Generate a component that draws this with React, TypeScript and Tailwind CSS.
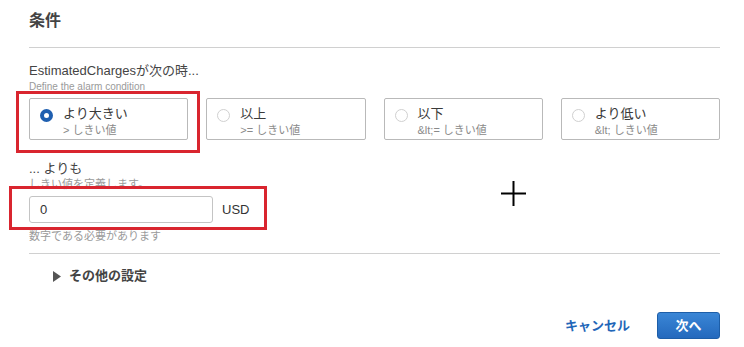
import React from 'react';

const font = { fontFamily: '"Liberation Sans", Arial, "Noto Sans CJK JP", sans-serif' };

type Opt = { label: string; sub: string; checked?: boolean };

const options: Opt[] = [
  { label: 'より大きい', sub: '> しきい値', checked: true },
  { label: '以上', sub: '>= しきい値' },
  { label: '以下', sub: '&lt;= しきい値' },
  { label: 'より低い', sub: '&lt; しきい値' },
];

const RadioCard: React.FC<{ opt: Opt }> = ({ opt }) => (
  <div className="h-[42px] border border-[#b9b9b9] rounded-[2px] flex items-start pl-[10px] pt-[7px] gap-[10px]">
    {opt.checked ? (
      <span className="mt-[3px] w-[13px] h-[13px] rounded-full border-[4px] border-[#1f5fb0] bg-white shrink-0" />
    ) : (
      <span className="mt-[3px] w-[13px] h-[13px] rounded-full border border-[#d0d0d0] bg-white shrink-0" />
    )}
    <div className="flex flex-col">
      <span className="text-[13px] leading-[16px] text-[#3a3a3a]">{opt.label}</span>
      <span className="text-[11px] leading-[14px] mt-[1px] text-[#8a8a8a]">{opt.sub}</span>
    </div>
  </div>
);

export default function App() {
  return (
    <div className="relative w-[744px] h-[347px] bg-white overflow-hidden" style={font}>
      <div className="pl-[29px] pr-[24px]">
        {/* header */}
        <div className="h-[48px] border-b border-[#d0d0d0] pt-[11px]">
          <h2 className="text-[16px] leading-[20px] font-bold text-[#444]">条件</h2>
        </div>

        <div className="mt-[15px] text-[13px] leading-[16px] text-[#444]">EstimatedChargesが次の時...</div>
        <div className="text-[10px] leading-[12px] mt-[2px] text-[#9a9a9a]">Define the alarm condition</div>

        <div className="mt-[5px] grid grid-cols-4 gap-[18px]">
          {options.map((o) => (
            <RadioCard key={o.label} opt={o} />
          ))}
        </div>

        <div className="mt-[21px] text-[13px] leading-[16px] text-[#444]">... よりも</div>
        <div className="text-[11px] leading-[13px] mt-[1px] text-[#9a9a9a]">しきい値を定義します。</div>

        <div className="mt-[5px] flex items-center gap-[9px]">
          <div className="w-[184px] h-[27px] border border-[#c4c4c4] rounded-[3px] flex items-center pl-[10px] text-[13px] text-[#333]">
            0
          </div>
          <span className="text-[13px] text-[#333]">USD</span>
        </div>
        <div className="mt-[6px] text-[11px] leading-[14px] text-[#9a9a9a]">数字である必要があります</div>

        <div className="mt-[10px] border-t border-[#d0d0d0]" />

        <div className="mt-[14px] flex items-center pl-[24px] gap-[8px]">
          <svg width="8" height="11" viewBox="0 0 8 11">
            <path d="M0 0 L8 5.5 L0 11 Z" fill="#555" />
          </svg>
          <span className="text-[13px] leading-[16px] font-bold text-[#444]">その他の設定</span>
        </div>

        <div className="mt-[28px] flex items-center justify-end gap-[27px]">
          <span className="text-[13px] font-bold text-[#1f66b8]">キャンセル</span>
          <button className="w-[63px] h-[27px] rounded-[3px] border border-[#1d5ea8] bg-gradient-to-b from-[#3a86d6] to-[#2469bd] text-white text-[13px] font-bold">
            次へ
          </button>
        </div>
      </div>

      {/* annotation boxes */}
      <div className="absolute left-[16px] top-[91px] w-[184px] h-[62px] border-[3px] border-[#d9252f]" />
      <div className="absolute left-[9px] top-[186px] w-[258px] h-[44px] border-[3px] border-[#d9252f]" />

      {/* cursor */}
      <svg className="absolute left-[501px] top-[181px]" width="25" height="25" viewBox="0 0 25 25">
        <path d="M12.5 0 V25 M0 12.5 H25" stroke="#000" strokeWidth="2" />
      </svg>
    </div>
  );
}
